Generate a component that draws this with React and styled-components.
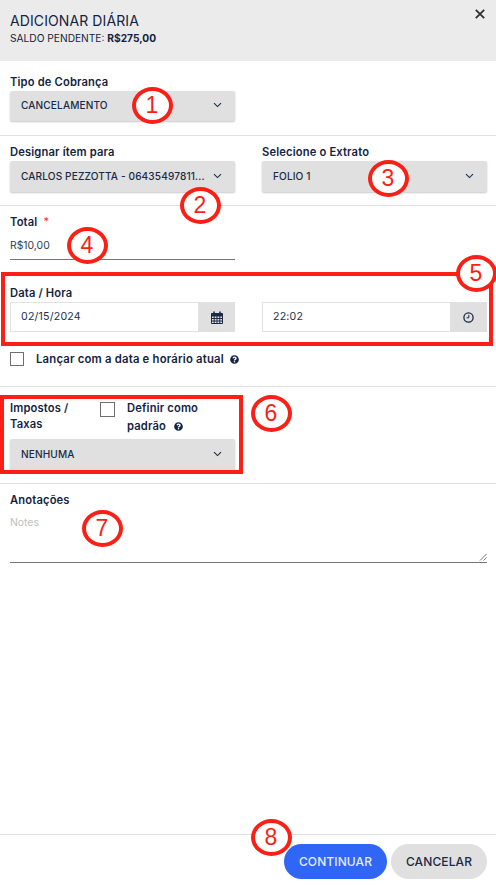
import React from "react";
import styled, { createGlobalStyle } from "styled-components";
import { FaQuestionCircle } from "react-icons/fa";

const Global = createGlobalStyle`
  html, body { margin: 0; padding: 0; background: #fff; }
  * { box-sizing: border-box; }
  body { font-family: Inter, "Liberation Sans", sans-serif; color: #1b2a44; }
`;

const Page = styled.div`
  position: relative;
  width: 496px;
  height: 885px;
  display: flex;
  flex-direction: column;
  overflow: hidden;
  background: #fff;
`;
const Header = styled.header`
  position: relative;
  height: 61px;
  flex: none;
  background: #ebebeb;
  padding: 12px 10px 0;
`;
const Title = styled.h1`
  margin: 0;
  font-size: 14px;
  line-height: 17px;
  font-weight: 400;
  letter-spacing: 0.1px;
  color: #14233f;
`;
const Balance = styled.div`
  margin-top: 2px;
  font-size: 10.2px;
  line-height: 14px;
  color: #14233f;
  b { font-weight: 700; }
`;
const Close = styled.svg`
  position: absolute;
  top: 9px;
  right: 11px;
  width: 10px;
  height: 10px;
`;
const Section = styled.section`
  flex: none;
  height: ${(p) => p.$h}px;
  padding: ${(p) => p.$top}px 9px 0 10px;
  border-bottom: 1px solid #e0e0e0;
`;
const Columns = styled.div`
  display: grid;
  grid-template-columns: 225px 225px;
  column-gap: 27px;
`;
const Label = styled.div`
  font-size: 11.2px;
  line-height: 14px;
  letter-spacing: 0.15px;
  font-weight: 600;
  color: #14233f;
  height: 14px;
  em { font-style: normal; color: #e53935; margin-left: 3px; font-weight: 400; }
`;
const Select = styled.div`
  width: 225px;
  height: ${(p) => p.$h || 30}px;
  margin-top: ${(p) => p.$mt ?? 2}px;
  background: #e0e0e0;
  border-radius: 2px;
  box-shadow: 0 1px 2px rgba(0, 0, 0, 0.22);
  display: flex;
  align-items: center;
  justify-content: space-between;
  padding: 0 13px 2px 11px;
  font-size: 10.1px;
  letter-spacing: 0.12px;
  font-weight: 500;
  color: #1b2a44;
`;
const SelectText = styled.span`
  white-space: nowrap;
`;
const Chevron = styled.svg`
  width: 9px;
  height: 6px;
  flex: none;
`;
const TextValue = styled.div`
  width: 225px;
  height: 27px;
  margin-top: 4px;
  border-bottom: 1px solid #777;
  font-size: 10.4px;
  line-height: 26px;
  color: #333e52;
`;
const DateLabel = styled(Label)`
  margin-top: 26px;
`;
const InputGroup = styled.div`
  height: 30px;
  margin-top: 2px;
  display: flex;
  border: 1px solid #e2e2e2;
  border-right: none;
`;
const InputText = styled.div`
  flex: 1;
  font-size: 10.6px;
  line-height: 28px;
  letter-spacing: 0.2px;
  padding-left: 10px;
  color: #222f47;
`;
const Addon = styled.div`
  width: 37px;
  margin: -1px 0;
  background: #e0e0e0;
  display: flex;
  align-items: center;
  justify-content: center;
`;
const CheckRow = styled.div`
  display: flex;
  align-items: center;
  margin-top: 20px;
  height: 14px;
`;
const Box = styled.span`
  display: block;
  flex: none;
  width: ${(p) => p.$s}px;
  height: ${(p) => p.$s}px;
  border: 1px solid #6e6e6e;
  background: #fff;
`;
const CheckLabel = styled.span`
  margin-left: 12px;
  font-size: 11.3px;
  letter-spacing: 0.2px;
  font-weight: 600;
  color: #14233f;
`;
const Help = styled(FaQuestionCircle)`
  width: 9px;
  height: 9px;
  margin-left: ${(p) => p.$gap}px;
  color: #14233f;
  vertical-align: -1px;
`;
const TaxHead = styled.div`
  width: 225px;
  height: 39px;
  display: grid;
  grid-template-columns: 90px 27px 1fr;
  align-items: start;
`;
const TaxLabel = styled.div`
  font-size: 11.2px;
  line-height: 16px;
  letter-spacing: 0.15px;
  font-weight: 600;
  color: #14233f;
`;
const TaxDefault = styled(TaxLabel)`
  line-height: 18px;
  margin-top: -1px;
`;
const TaxBox = styled(Box)`
  margin-top: 2px;
`;
const Notes = styled.div`
  position: relative;
  height: 51px;
  margin-top: 5px;
  width: 477px;
  border-bottom: 1px solid #777;
  font-size: 10.4px;
  line-height: 14px;
  color: #bdbdbd;
  padding-top: 4px;
`;
const Grip = styled.svg`
  position: absolute;
  right: 0;
  bottom: 1px;
  width: 8px;
  height: 8px;
`;
const NotesBlock = styled.div`
  flex: 1;
  padding: 9px 9px 0 10px;
`;
const Footer = styled.footer`
  flex: none;
  height: 51px;
  border-top: 1px solid #e0e0e0;
  display: flex;
  justify-content: flex-end;
  gap: 4px;
  padding: 9px 9px 0 0;
`;
const Button = styled.div`
  width: ${(p) => p.$w}px;
  height: 35px;
  border-radius: 18px;
  background: ${(p) => (p.$primary ? "#2f66f5" : "#e0e0e0")};
  color: ${(p) => (p.$primary ? "#e4ecff" : "#1b2a44")};
  display: flex;
  align-items: center;
  justify-content: center;
  font-size: 12px;
  font-weight: 500;
  letter-spacing: 0.1px;
`;
const RedBox = styled.div`
  position: absolute;
  left: ${(p) => p.$x}px;
  top: ${(p) => p.$y}px;
  width: ${(p) => p.$w}px;
  height: ${(p) => p.$h}px;
  border: 4px solid #fb1f16;
`;
const Marker = styled.div`
  position: absolute;
  left: ${(p) => p.$x - 20.5}px;
  top: ${(p) => p.$y - 18.5}px;
  width: 41px;
  height: 37px;
  border: 4px solid #fb1f16;
  border-radius: 50%;
  background: #fff;
  color: #fb1f16;
  display: flex;
  align-items: center;
  justify-content: center;
  font-family: "Liberation Sans", Arial, sans-serif;
  font-size: 23px;
`;

const Down = () => (
  <Chevron viewBox="0 0 9 6">
    <path d="M1 1.2 L4.5 4.6 L8 1.2" fill="none" stroke="#1b2a44" strokeWidth="1.1" />
  </Chevron>
);
const CalendarIcon = () => (
  <svg width="12" height="13" viewBox="0 0 12 13">
    <path
      d="M.5 2.5h11v10H.5z M.5 5h11 M.5 7.5h11 M.5 10h11 M3.2 5v7.5 M6 5v7.5 M8.8 5v7.5"
      fill="none"
      stroke="#1b2a44"
      strokeWidth="1"
    />
    <path d="M2.2 .6h1.6v3H2.2z M8.2 .6h1.6v3H8.2z" fill="#1b2a44" />
    <path d="M.5 2.5h11V5H.5z" fill="#1b2a44" />
  </svg>
);
const ClockIcon = () => (
  <svg width="11" height="11" viewBox="0 0 11 11">
    <circle cx="5.5" cy="5.5" r="4.6" fill="none" stroke="#1b2a44" strokeWidth="1.3" />
    <path d="M5.8 2.8v3H3.6" fill="none" stroke="#1b2a44" strokeWidth="1" />
  </svg>
);

export default function App() {
  return (
    <>
      <Global />
      <Page>
        <Header>
          <Title>ADICIONAR DIÁRIA</Title>
          <Balance>
            SALDO PENDENTE: <b>R$275,00</b>
          </Balance>
          <Close viewBox="0 0 10 10">
            <path d="M.8 .8 L9.2 9.2 M9.2 .8 L.8 9.2" stroke="#2a2a2a" strokeWidth="1.7" />
          </Close>
        </Header>

        <Section $h={75} $top={14}>
          <Label>Tipo de Cobrança</Label>
          <Select>
            <SelectText>CANCELAMENTO</SelectText>
            <Down />
          </Select>
        </Section>

        <Section $h={70} $top={9}>
          <Columns>
            <div>
              <Label>Designar ítem para</Label>
              <Select $h={31}>
                <SelectText>CARLOS PEZZOTTA - 06435497811...</SelectText>
                <Down />
              </Select>
            </div>
            <div>
              <Label>Selecione o Extrato</Label>
              <Select $h={31}>
                <SelectText>FOLIO 1</SelectText>
                <Down />
              </Select>
            </div>
          </Columns>
        </Section>

        <Section $h={181} $top={9}>
          <Label>
            Total <em>*</em>
          </Label>
          <TextValue>R$10,00</TextValue>
          <DateLabel>Data / Hora</DateLabel>
          <Columns>
            <InputGroup>
              <InputText>02/15/2024</InputText>
              <Addon>
                <CalendarIcon />
              </Addon>
            </InputGroup>
            <InputGroup>
              <InputText>22:02</InputText>
              <Addon>
                <ClockIcon />
              </Addon>
            </InputGroup>
          </Columns>
          <CheckRow>
            <Box $s={14} />
            <CheckLabel>
              Lançar com a data e horário atual
              <Help $gap={6} />
            </CheckLabel>
          </CheckRow>
        </Section>

        <Section $h={97} $top={13}>
          <TaxHead>
            <TaxLabel>
              Impostos /<br />
              Taxas
            </TaxLabel>
            <TaxBox $s={15} />
            <TaxDefault>
              Definir como
              <br />
              padrão
              <Help $gap={8} />
            </TaxDefault>
          </TaxHead>
          <Select $mt={0} $h={31}>
            <SelectText>NENHUMA</SelectText>
            <Down />
          </Select>
        </Section>

        <NotesBlock>
          <Label>Anotações</Label>
          <Notes>
            Notes
            <Grip viewBox="0 0 8 8">
              <path d="M1 7.5 L7.5 1 M4.5 7.5 L7.5 4.5" stroke="#555" strokeWidth="0.8" />
            </Grip>
          </Notes>
        </NotesBlock>

        <Footer>
          <Button $primary $w={103}>CONTINUAR</Button>
          <Button $w={96}>CANCELAR</Button>
        </Footer>

        <RedBox $x={1} $y={272} $w={492} $h={74} />
        <RedBox $x={0} $y={395} $w={243} $h={79} />
        <Marker $x={152} $y={105}>1</Marker>
        <Marker $x={200} $y={205}>2</Marker>
        <Marker $x={388} $y={178}>3</Marker>
        <Marker $x={87} $y={245}>4</Marker>
        <Marker $x={476} $y={273}>5</Marker>
        <Marker $x={271} $y={413}>6</Marker>
        <Marker $x={102} $y={528}>7</Marker>
        <Marker $x={271} $y={837}>8</Marker>
      </Page>
    </>
  );
}
